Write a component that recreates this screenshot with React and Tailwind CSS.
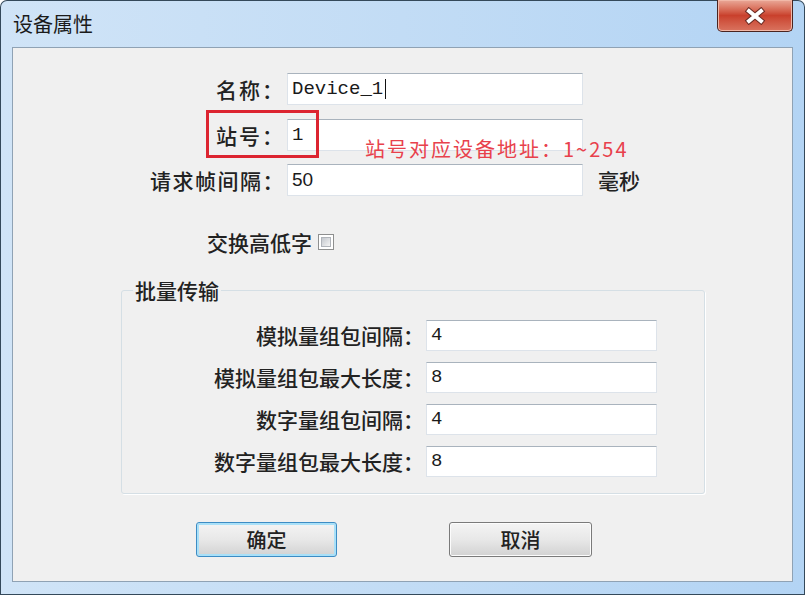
const cjk = { fontFamily: '"Noto Sans CJK SC", sans-serif' };
const mono = { fontFamily: '"Liberation Mono", monospace' };

function TextBox({ value, width, height = 32, monoFont = true, cursor = false }) {
  return (
    <div
      className={`flex items-center bg-white border border-[#dde3ea] border-t-[#a9b3bd] pl-[4px] text-[19px] text-[#1a1a1a] ${width} ${height === 32 ? "h-[32px]" : "h-[31px]"}`}
      style={monoFont ? mono : { fontFamily: '"Liberation Sans", sans-serif' }}
    >
      {value}
      {cursor && <span className="w-px h-[20px] bg-[#111] ml-[2px]" />}
    </div>
  );
}

function Label({ children, className = "" }) {
  return (
    <div className={`text-right text-[21px] leading-none font-medium text-[#222] shrink-0 ${className}`} style={cjk}>
      {children}
    </div>
  );
}

function WinButton({ children, primary = false }) {
  return (
    <button
      className={`h-[35px] rounded-[3px] border text-[20px] font-medium text-[#222] bg-gradient-to-b from-[#f4f4f4] via-[#e8e8e8] to-[#d2d2d2] ${
        primary
          ? "w-[141px] border-[#3d8cc4] shadow-[inset_0_0_0_2px_#a9e0f8]"
          : "w-[143px] border-[#7a7a7a] shadow-[inset_0_0_0_1px_#fcfcfc]"
      }`}
      style={cjk}
    >
      {children}
    </button>
  );
}

export default function App() {
  const group = [
    ["模拟量组包间隔：", "4"],
    ["模拟量组包最大长度：", "8"],
    ["数字量组包间隔：", "4"],
    ["数字量组包最大长度：", "8"],
  ];

  return (
    <div className="w-[805px] h-[595px] bg-[#34495a] p-px rounded-t-[7px]">
      <div className="h-full flex flex-col rounded-t-[6px] bg-gradient-to-r from-[#d0e4f7] via-[#c2dcf5] to-[#b3d4f4] px-[11px] pb-[12px]">
        {/* Title bar */}
        <div className="h-[46px] flex justify-between items-start shrink-0">
          <div className="pt-[13px] pl-[1px] text-[20px] leading-none text-[#1b1b1b]" style={cjk}>
            设备属性
          </div>
          <div className="w-[76px] h-[32px] -mt-px rounded-b-[5px] border border-[#4a2420] border-t-0 bg-gradient-to-b from-[#e9a898] via-[#c9402c] to-[#d9735f] flex items-center justify-center shadow-[inset_0_0_0_1px_#f1b8a8]">
            <svg width="22" height="18" viewBox="0 0 22 18">
              <path d="M5 4 L17 14 M17 4 L5 14" stroke="#6b2a22" strokeWidth="6" strokeLinecap="square" />
              <path d="M5 4 L17 14 M17 4 L5 14" stroke="#ffffff" strokeWidth="4" strokeLinecap="square" />
            </svg>
          </div>
        </div>

        {/* Content */}
        <div className="flex-1 relative border border-[#8fa2b4] bg-[#f0f0f0] flex flex-col pt-[25px]">
          <div className="flex items-center">
            <Label className="w-[272px] tracking-[2px]">名称：</Label>
            <div className="ml-[2px]">
              <TextBox value="Device_1" width="w-[296px]" cursor />
            </div>
          </div>
          <div className="flex items-center mt-[14px]">
            <Label className="w-[272px] tracking-[2px]">站号：</Label>
            <div className="ml-[2px]">
              <TextBox value="1" width="w-[296px]" />
            </div>
          </div>
          <div className="flex items-center mt-[13px]">
            <Label className="w-[272px] tracking-[1.5px]">请求帧间隔：</Label>
            <div className="ml-[2px]">
              <TextBox value="50" width="w-[296px]" monoFont={false} />
            </div>
            <Label className="ml-[15px]">毫秒</Label>
          </div>

          <div className="flex items-center h-[32px] mt-[30px] pl-[194px]">
            <Label>交换高低字</Label>
            <div className="ml-[6px] w-[16px] h-[16px] border border-[#8e8f8f] bg-white p-[2px]">
              <div className="w-full h-full bg-gradient-to-br from-[#c4c8ce] to-[#f4f4f4] border border-[#b0b4ba]" />
            </div>
          </div>

          <fieldset className="mt-[22px] ml-[108px] w-[584px] h-[214px] border border-[#d5dfe5] rounded-[3px] shadow-[1px_1px_0_#ffffff] px-[16px] pt-[19px]">
            <legend className="-ml-[5px] px-[2px] text-[21px] leading-none font-medium text-[#222]" style={cjk}>
              批量传输
            </legend>
            <div className="flex flex-col gap-[11px]">
              {group.map(([label, value]) => (
                <div key={label} className="flex items-center">
                  <Label className="w-[286px]">{label}</Label>
                  <div className="ml-[2px]">
                    <TextBox value={value} width="w-[231px]" height={31} />
                  </div>
                </div>
              ))}
            </div>
          </fieldset>

          <div className="flex mt-[28px] pl-[183px] gap-[112px]">
            <WinButton primary>确定</WinButton>
            <WinButton>取消</WinButton>
          </div>

          {/* Annotation overlay */}
          <div className="absolute left-[193px] top-[62px] w-[113px] h-[48px] border-[3px] border-[#dc2430]" />
          <div
            className="absolute left-[352px] top-[91px] text-[20px] leading-none tracking-[2px] text-[#e8414c]"
            style={cjk}
          >
            站号对应设备地址：1~254
          </div>
        </div>
      </div>
    </div>
  );
}
